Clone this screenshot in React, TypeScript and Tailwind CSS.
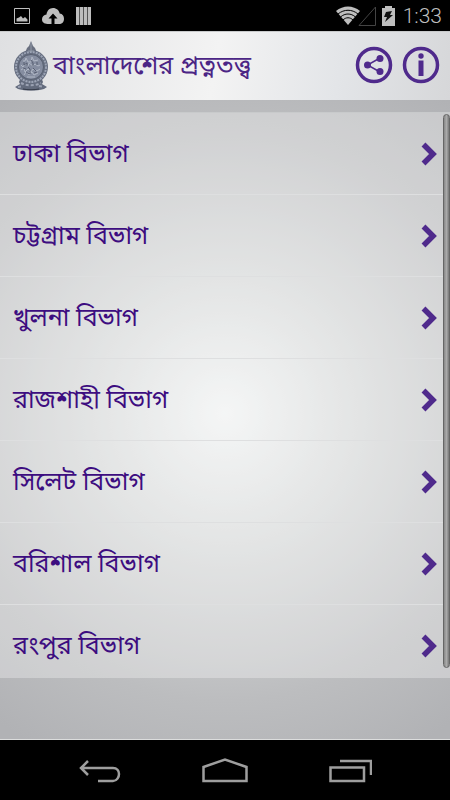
import type { ReactNode } from "react";

const divisions = [
  "ঢাকা বিভাগ",
  "চট্টগ্রাম বিভাগ",
  "খুলনা বিভাগ",
  "রাজশাহী বিভাগ",
  "সিলেট বিভাগ",
  "বরিশাল বিভাগ",
  "রংপুর বিভাগ",
];

const StatusBar = () => (
  <div className="flex h-[31px] shrink-0 items-center justify-between bg-black pl-3.5 pr-2 text-[#bebebe]">
    <div className="flex items-center gap-3">
      <svg width="16" height="16" viewBox="0 0 16 16" fill="none">
        <path d="M.5.5h15v15H.5z" stroke="currentColor" />
        <path d="M2.500 13.500v-3l2.500-1 2-1.500 2 2.500 2-1.500 2.500 2.500v2z" fill="currentColor" />
      </svg>
      <svg width="22" height="16" viewBox="0 0 22 16" fill="currentColor">
        <path d="M5.500 16C2 16 0 14 0 11.300 0 8.500 2 6.700 4.500 6.400 5 2.800 7.500 0 11 0s6 2.300 6.700 5.500C20.500 5.800 22 8 22 10.700 22 14 20 16 17 16z" />
        <path d="M11 5.500 6.500 10.500h3V16h3v-5.500h3z" fill="#000" />
      </svg>
      <svg width="15" height="18" viewBox="0 0 15 18">
        <path d="M0 0h3v18H0zM4 0h3v18H4zM8 0h3v18H8zM12 0h3v18h-3z" fill="currentColor" />
        <path d="M3.500 0v18M7.500 0v18M11.500 0v18" stroke="#555" />
      </svg>
    </div>
    <div className="flex items-center">
      <svg width="24" height="19" viewBox="0 0 24 19">
        <path d="M12 19 0 5C7-1 17-1 24 5z" fill="currentColor" />
        <path d="M2 8c6-5 14-5 20 0M4.500 11c4.500-4 10.500-4 15 0M7 14c3-3 7-3 10 0" fill="none" stroke="#000" />
      </svg>
      <svg width="18" height="20" viewBox="0 0 18 20" fill="none" className="-ml-0.5">
        <path d="M17.500 1v18.500H1z" stroke="#444" />
      </svg>
      <svg width="13" height="20" viewBox="0 0 13 20" fill="currentColor" className="ml-1.5">
        <path d="M3 0h7v2h3v18H0V2h3z" />
        <path d="m4 6 6-1-2 4h3L3 16l2-5H2z" fill="#111" />
      </svg>
      <span className="ml-2 font-[Roboto,sans-serif] text-[21px] font-light leading-6">1:33</span>
    </div>
  </div>
);

const Emblem = () => (
  <svg width="36" height="50" viewBox="0 0 36 50" className="shrink-0">
    <path d="m18 0 2 5 2 2 2 5H12l2-5 2-2z" fill="#6a7080" />
    <path d="m8 36-2 5 1 2-5 3 3 2c8 2 18 2 26 0l3-2-5-3 1-2-2-5z" fill="#626a7c" />
    <path d="M8 42c6 3 14 3 20 0M5 46l5-1M26 45l5 1" fill="none" stroke="#9ba2b3" strokeWidth="2" strokeDasharray="3 2" />
    <circle cx="18" cy="26" r="17" fill="#656d7f" />
    <circle cx="18" cy="26" r="15" fill="none" stroke="#9ca4b5" strokeWidth="2" strokeDasharray="2 1" />
    <circle cx="18" cy="26" r="12.500" fill="#858da0" stroke="#596172" />
    <path
      d="M10 20h2l1-3 2 4h3l1-5 2 4 4-1M8 24l2 2 2-3 3 2 1-3 4 3 2-2 3 2 2-1M8 29l3-2 1 4 3-3 3 3 2-3 4 2 3-2M11 34l2-3 3 3 3-3 2 3 4-2M14 36h8"
      fill="none"
      stroke="#b0b7c5"
    />
    <path d="M11 21v3l3-2v3M18 19l2 3v3M24 21v3M10 27l3 1M15 26l2 2v3M20 27l3 3M13 31l3 2 2-1M21 32l3-1" fill="none" stroke="#596073" />
    <path d="M18 2v8M15 10h6" stroke="#9199a7" />
    <path d="M10 48c5 1 11 1 16 0" fill="none" stroke="#343a48" />
  </svg>
);

const RoundButton = ({ label, children }: { label: string; children: ReactNode }) => (
  <button type="button" aria-label={label} className="text-[#4f2a8c]">
    <svg width="38" height="38" viewBox="0 0 38 38" fill="none" stroke="currentColor">
      <circle cx="19" cy="19" r="16.500" strokeWidth="3.500" />
      {children}
    </svg>
  </button>
);

const Header = () => (
  <header className="flex h-[69px] shrink-0 items-center border-t border-[#c8cacb] bg-[linear-gradient(100deg,#dfe0e2_0%,#f3f3f3_48%,#e3e5e8_75%,#d6d7d9_100%)] pl-[13px] pr-2.5">
    <Emblem />
    <h1 className="ml-1 whitespace-nowrap pt-1 text-[25px] font-normal leading-10 text-[#4b2585]">
      বাংলাদেশের প্রত্নতত্ত্ব
    </h1>
    <div className="ml-auto flex gap-[9px] pb-0.5">
      <RoundButton label="শেয়ার">
        <path d="M25 12 12.500 19 25 26" strokeWidth="1.500" />
        <g fill="currentColor" stroke="none">
          <circle cx="25" cy="12.500" r="3.500" />
          <circle cx="12.500" cy="19" r="3.500" />
          <circle cx="25" cy="25.500" r="3.500" />
        </g>
      </RoundButton>
      <RoundButton label="তথ্য">
        <g fill="currentColor" stroke="none">
          <circle cx="19" cy="10" r="2.700" />
          <path d="M16.500 14.500h5V30h-5z" />
        </g>
      </RoundButton>
    </div>
  </header>
);

const DivisionRow = ({ name }: { name: string }) => (
  <li className="border-t border-[#dedfe0] first:border-[#c8cacb] last:h-[74px]">
    <button type="button" className="flex h-[81px] w-full items-center justify-between pl-[13px] pr-3 text-left">
      <span className="pt-1 text-[25px] font-normal leading-10 text-[#3d0d80]">{name}</span>
      <svg width="17" height="24" viewBox="0 0 17 24" fill="none">
        <path d="M2.500 2.500 12 12l-9.500 9.500" stroke="#4f2a8c" strokeWidth="5.500" />
      </svg>
    </button>
  </li>
);

const NavBar = () => (
  <nav className="flex h-[60px] shrink-0 items-center justify-center gap-[80px] bg-black text-[#9e9e9e]">
    <button type="button" aria-label="Back">
      <svg width="44" height="26" viewBox="0 0 44 26" fill="none" stroke="currentColor" strokeWidth="2.500">
        <path d="M10 4 3 11l7 7M3 11h32c4 0 6 3 6 6s-2 7-6 7H20" />
      </svg>
    </button>
    <button type="button" aria-label="Home">
      <svg width="46" height="26" viewBox="0 0 46 26" fill="none" stroke="currentColor" strokeWidth="2.500">
        <path d="M1.500 10 23 2.500 44.500 10v14h-43z" />
      </svg>
    </button>
    <button type="button" aria-label="Recent apps">
      <svg width="44" height="26" viewBox="0 0 44 26" fill="none" stroke="currentColor" strokeWidth="2.500">
        <path d="M2.500 10.500H36V24H2.500zM12 4h31v14" />
      </svg>
    </button>
  </nav>
);

const App = () => {
  return (
    <div className="flex min-h-screen flex-col bg-black font-['Noto_Sans_Bengali','Noto_Sans',sans-serif]">
      <StatusBar />
      <Header />
      <main className="relative grow border-b border-[#dcdddd] bg-[radial-gradient(ellipse_85%_60%_at_50%_49%,#f0f2f2_0%,#d7d9d9_35%,#bcbdbf_75%,#b1b2b5_100%)] pt-3">
        <ul className="bg-white/30">
          {divisions.map((name) => (
            <DivisionRow key={name} name={name} />
          ))}
        </ul>
        <div className="absolute right-0 top-3.5 h-[554px] w-[7px] rounded-full border border-[#666] bg-[linear-gradient(90deg,#888,#aaa,#777)]" />
      </main>
      <NavBar />
    </div>
  );
};

export default App;
